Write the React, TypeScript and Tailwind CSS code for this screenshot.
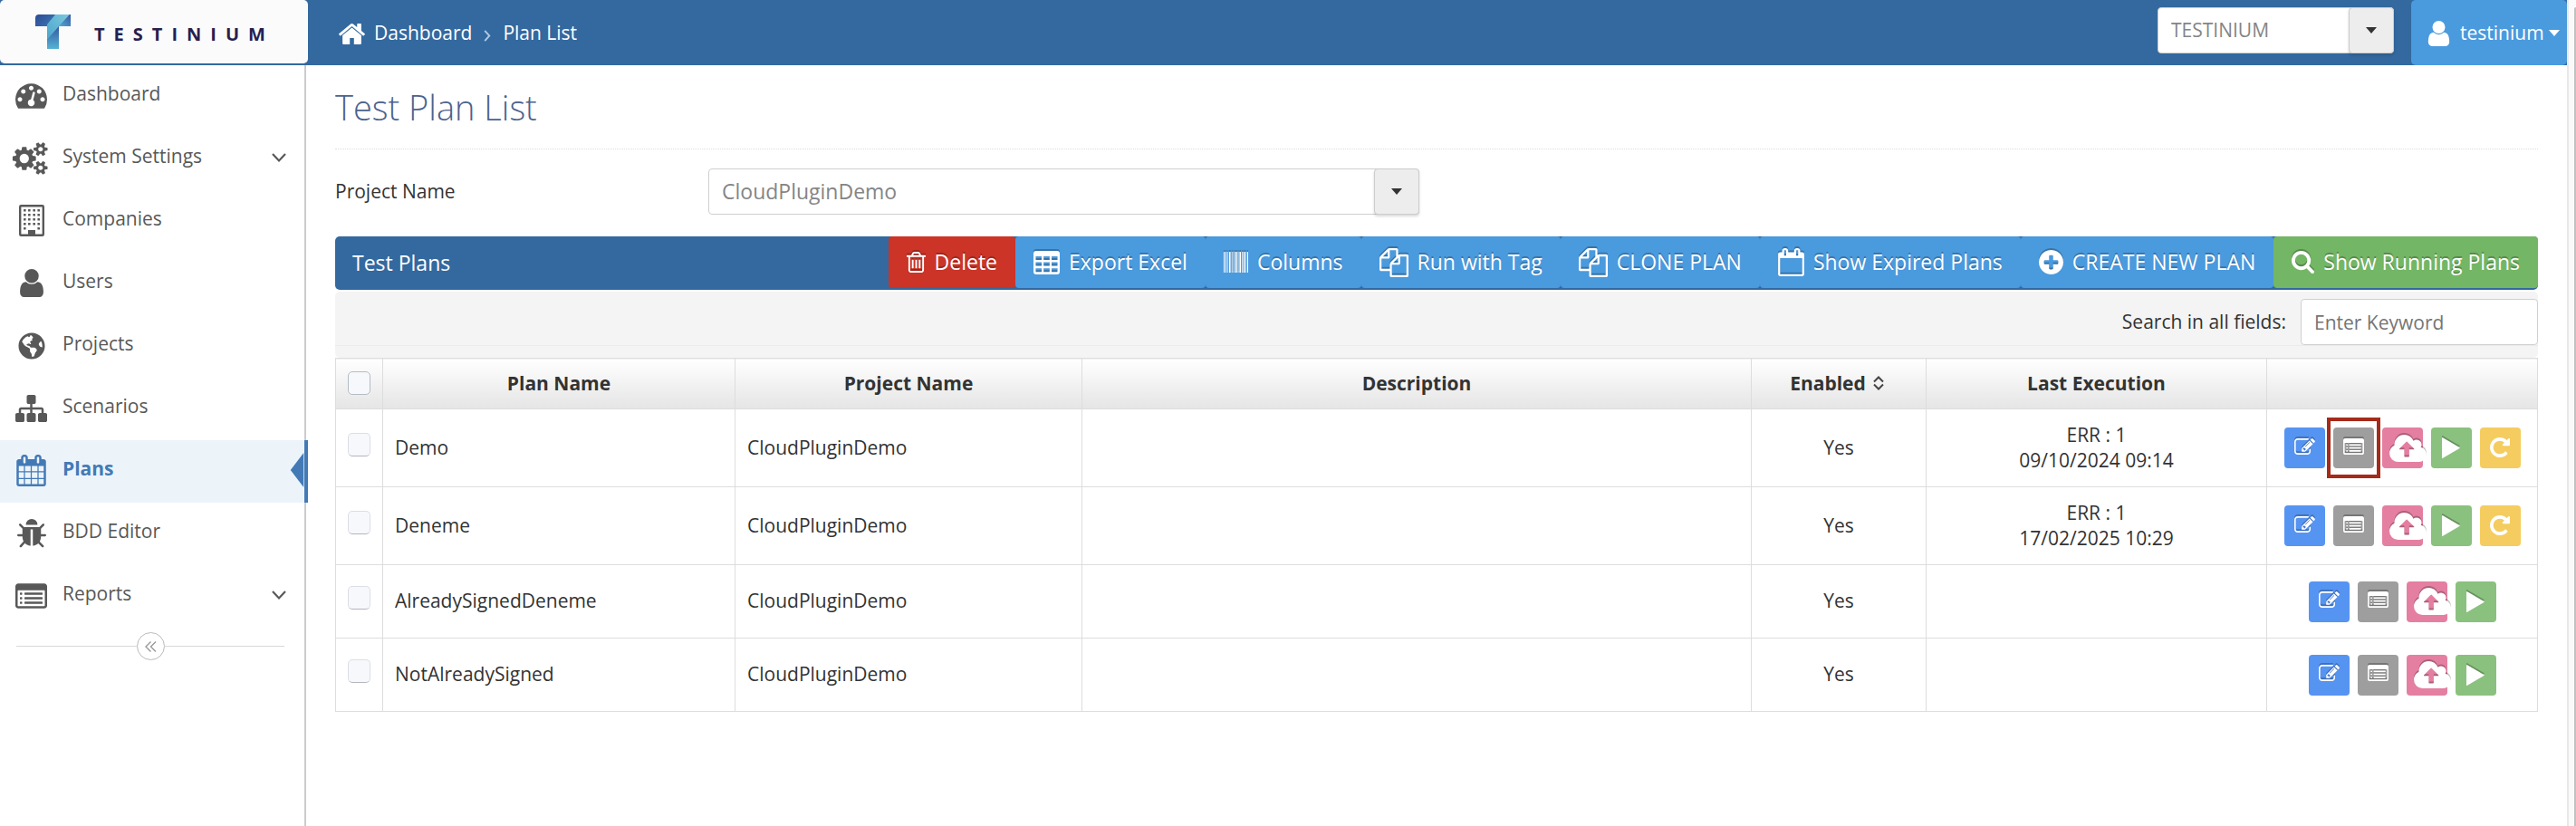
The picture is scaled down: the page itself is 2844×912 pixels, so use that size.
import React from "react";
import { FaGlobeAmericas } from "react-icons/fa";

const PATHS = {
  home: {
    box: "90 200 1612 1336",
    d: "M1472 992v480q0 26-19 45t-45 19h-384v-384h-256v384h-384q-26 0-45-19t-19-45v-480q0-1 .5-3t.5-3l575-474 575 474q1 2 1 6zm223-69l-62 74q-8 9-21 11h-3q-13 0-21-7l-692-577-692 577q-12 8-24 7-13-2-21-11l-62-74q-8-10-7-23.5t11-21.5l719-599q32-26 76-26t76 26l244 204v-195q0-14 9-23t23-9h192q14 0 23 9t9 23v408l219 182q10 8 11 21.5t-7 23.5z",
  },
  user: {
    box: "256 128 1280 1536",
    d: "M1536 1399q0 109-62.5 187t-150.5 78h-854q-88 0-150.5-78t-62.5-187q0-85 8.5-160.5t31.5-152 58.5-131 94-89 134.5-34.5q131 128 313 128t313-128q76 0 134.5 34.5t94 89 58.5 131 31.5 152 8.5 160.5zm-256-887q0 159-112.5 271.5t-271.5 112.5-271.5-112.5-112.5-271.5 112.5-271.5 271.5-112.5 271.5 112.5 112.5 271.5z",
  },
  gauge: {
    box: "0 256 1792 1408",
    d: "M384 1152q0-53-37.5-90.5t-90.5-37.5-90.5 37.5-37.5 90.5 37.5 90.5 90.5 37.5 90.5-37.5 37.5-90.5zm192-448q0-53-37.5-90.5t-90.5-37.5-90.5 37.5-37.5 90.5 37.5 90.5 90.5 37.5 90.5-37.5 37.5-90.5zm428 481l101-382q6-26-7.5-48.5t-38.5-29.5-48 6.5-30 39.5l-101 382q-60 5-107 43.5t-63 98.5q-20 77 20 146t117 89 146-20 89-117q16-60-6-117t-72-91zm660-33q0-53-37.5-90.5t-90.5-37.5-90.5 37.5-37.5 90.5 37.5 90.5 90.5 37.5 90.5-37.5 37.5-90.5zm-640-640q0-53-37.5-90.5t-90.5-37.5-90.5 37.5-37.5 90.5 37.5 90.5 90.5 37.5 90.5-37.5 37.5-90.5zm448 192q0-53-37.5-90.5t-90.5-37.5-90.5 37.5-37.5 90.5 37.5 90.5 90.5 37.5 90.5-37.5 37.5-90.5zm320 448q0 261-141 483-19 29-54 29h-1402q-35 0-54-29-141-221-141-483 0-182 71-348t191-286 286-191 348-71 348 71 286 191 191 286 71 348z",
  },
  cogs: {
    box: "0 0 1920 1792",
    d: "M832 896q0-106-75-181t-181-75-181 75-75 181 75 181 181 75 181-75 75-181zm768 512q0-52-38-90t-90-38-90 38-38 90q0 53 37.5 90.5t90.5 37.5 90.5-37.5 37.5-90.5zm0-1024q0-52-38-90t-90-38-90 38-38 90q0 53 37.5 90.5t90.5 37.5 90.5-37.5 37.5-90.5zm-384 421v185q0 10-7 19.5t-16 10.5l-155 24q-11 35-32 76 34 48 90 115 7 11 7 20 0 12-7 19-23 30-82.5 89.5t-78.5 59.5q-11 0-21-7l-115-90q-37 19-77 31-11 108-23 155-7 24-30 24h-186q-11 0-20-7.5t-10-17.5l-23-153q-34-10-75-31l-118 89q-7 7-20 7-11 0-21-8-144-133-144-160 0-9 7-19 10-14 41-53t47-61q-23-44-35-82l-152-24q-10-1-17-9.5t-7-19.5v-185q0-10 7-19.5t16-10.5l155-24q11-35 32-76-34-48-90-115-7-11-7-20 0-12 7-20 22-30 82-89t79-59q11 0 21 7l115 90q34-18 77-32 11-108 23-154 7-24 30-24h186q11 0 20 7.5t10 17.5l23 153q34 10 75 31l118-89q8-7 20-7 11 0 21 8 144 133 144 160 0 8-7 19-12 16-42 54t-45 60q23 48 34 82l152 23q10 2 17 10.5t7 19.5zm640 533v140q0 16-149 31-12 27-30 52 51 113 51 138 0 4-4 7-122 71-124 71-8 0-46-47t-52-68q-20 2-30 2t-30-2q-14 21-52 68t-46 47q-2 0-124-71-4-3-4-7 0-25 51-138-18-25-30-52-149-15-149-31v-140q0-16 149-31 13-29 30-52-51-113-51-138 0-4 4-7 4-2 35-20t59-34 30-16q8 0 46 46.5t52 67.5q20-2 30-2t30 2q51-71 92-112l6-2q4 0 124 70 4 3 4 7 0 25-51 138 17 23 30 52 149 15 149 31zm0-1024v140q0 16-149 31-12 27-30 52 51 113 51 138 0 4-4 7-122 71-124 71-8 0-46-47t-52-68q-20 2-30 2t-30-2q-14 21-52 68t-46 47q-2 0-124-71-4-3-4-7 0-25 51-138-18-25-30-52-149-15-149-31v-140q0-16 149-31 13-29 30-52-51-113-51-138 0-4 4-7 4-2 35-20t59-34 30-16q8 0 46 46.5t52 67.5q20-2 30-2t30 2q51-71 92-112l6-2q4 0 124 70 4 3 4 7 0 25-51 138 17 23 30 52 149 15 149 31z",
  },
  sitemap: {
    box: "0 128 1792 1536",
    d: "M1792 1248v320q0 40-28 68t-68 28h-320q-40 0-68-28t-28-68v-320q0-40 28-68t68-28h96v-192h-512v192h96q40 0 68 28t28 68v320q0 40-28 68t-68 28h-320q-40 0-68-28t-28-68v-320q0-40 28-68t68-28h96v-192h-512v192h96q40 0 68 28t28 68v320q0 40-28 68t-68 28h-320q-40 0-68-28t-28-68v-320q0-40 28-68t68-28h96v-192q0-52 38-90t90-38h512v-192h-96q-40 0-68-28t-28-68v-320q0-40 28-68t68-28h320q40 0 68 28t28 68v320q0 40-28 68t-68 28h-96v192h512q52 0 90 38t38 90v192h96q40 0 68 28t28 68z",
  },
  calendar: {
    box: "64 0 1664 1792",
    d: "M192 1664h288v-288h-288v288zm352 0h320v-288h-320v288zm-352-352h288v-320h-288v320zm352 0h320v-320h-320v320zm-352-384h288v-288h-288v288zm736 736h320v-288h-320v288zm-384-736h320v-288h-320v288zm768 736h288v-288h-288v288zm-384-352h320v-320h-320v320zm-352-864v-288q0-13-9.5-22.5t-22.5-9.5h-64q-13 0-22.5 9.5t-9.5 22.5v288q0 13 9.5 22.5t22.5 9.5h64q13 0 22.5-9.5t9.5-22.5zm736 864h288v-320h-288v320zm-384-384h320v-288h-320v288zm384 0h288v-288h-288v288zm32-480v-288q0-13-9.5-22.5t-22.5-9.5h-64q-13 0-22.5 9.5t-9.5 22.5v288q0 13 9.5 22.5t22.5 9.5h64q13 0 22.5-9.5t9.5-22.5zm384-64v1280q0 52-38 90t-90 38h-1408q-52 0-90-38t-38-90v-1280q0-52 38-90t90-38h128v-96q0-66 47-113t113-47h64q66 0 113 47t47 113v96h384v-96q0-66 47-113t113-47h64q66 0 113 47t47 113v96h128q52 0 90 38t38 90z",
  },
  calendarBlank: {
    box: "64 0 1664 1792",
    d: "M192 1664h1408v-1024h-1408v1024zm384-1216v-288q0-14-9-23t-23-9h-64q-14 0-23 9t-9 23v288q0 14 9 23t23 9h64q14 0 23-9t9-23zm768 0v-288q0-14-9-23t-23-9h-64q-14 0-23 9t-9 23v288q0 14 9 23t23 9h64q14 0 23-9t9-23zm384-64v1280q0 52-38 90t-90 38h-1408q-52 0-90-38t-38-90v-1280q0-52 38-90t90-38h128v-96q0-66 47-113t113-47h64q66 0 113 47t47 113v96h384v-96q0-66 47-113t113-47h64q66 0 113 47t47 113v96h128q52 0 90 38t38 90z",
  },
  bug: {
    box: "96 64 1600 1600",
    d: "M1696 960q0 26-19 45t-45 19h-224q0 171-67 290l208 209q19 19 19 45t-19 45q-18 19-45 19t-45-19l-198-197q-5 5-15 13t-42 28.5-65 36.5-82 29-97 13v-896h-128v896q-51 0-101.5-13.5t-87-33-66-39-43.5-32.5l-15-14-183 207q-20 21-48 21-24 0-43-16-19-18-20.5-44.5t15.5-46.5l202-227q-58-114-58-274h-224q-26 0-45-19t-19-45 19-45 45-19h224v-294l-173-173q-19-19-19-45t19-45 45-19 45 19l173 173h844l173-173q19-19 45-19t45 19 19 45-19 45l-173 173v294h224q26 0 45 19t19 45zm-480-576h-640q0-133 93.5-226.5t226.5-93.5 226.5 93.5 93.5 226.5z",
  },
  list: {
    box: "0 128 1792 1408",
    d: "M384 1184v64q0 13-9.5 22.5t-22.5 9.5h-64q-13 0-22.5-9.5t-9.5-22.5v-64q0-13 9.5-22.5t22.5-9.5h64q13 0 22.5 9.5t9.5 22.5zm0-256v64q0 13-9.5 22.5t-22.5 9.5h-64q-13 0-22.5-9.5t-9.5-22.5v-64q0-13 9.5-22.5t22.5-9.5h64q13 0 22.5 9.5t9.5 22.5zm0-256v64q0 13-9.5 22.5t-22.5 9.5h-64q-13 0-22.5-9.5t-9.5-22.5v-64q0-13 9.5-22.5t22.5-9.5h64q13 0 22.5 9.5t9.5 22.5zm1152 512v64q0 13-9.5 22.5t-22.5 9.5h-960q-13 0-22.5-9.5t-9.5-22.5v-64q0-13 9.5-22.5t22.5-9.5h960q13 0 22.5 9.5t9.5 22.5zm0-256v64q0 13-9.5 22.5t-22.5 9.5h-960q-13 0-22.5-9.5t-9.5-22.5v-64q0-13 9.5-22.5t22.5-9.5h960q13 0 22.5 9.5t9.5 22.5zm0-256v64q0 13-9.5 22.5t-22.5 9.5h-960q-13 0-22.5-9.5t-9.5-22.5v-64q0-13 9.5-22.5t22.5-9.5h960q13 0 22.5 9.5t9.5 22.5zm128 704v-832q0-13-9.5-22.5t-22.5-9.5h-1472q-13 0-22.5 9.5t-9.5 22.5v832q0 13 9.5 22.5t22.5 9.5h1472q13 0 22.5-9.5t9.5-22.5zm128-1088v1088q0 66-47 113t-113 47h-1472q-66 0-113-47t-47-113v-1088q0-66 47-113t113-47h1472q66 0 113 47t47 113z",
  },
  trash: {
    box: "192 128 1408 1536",
    d: "M704 736v576q0 14-9 23t-23 9h-64q-14 0-23-9t-9-23v-576q0-14 9-23t23-9h64q14 0 23 9t9 23zm256 0v576q0 14-9 23t-23 9h-64q-14 0-23-9t-9-23v-576q0-14 9-23t23-9h64q14 0 23 9t9 23zm256 0v576q0 14-9 23t-23 9h-64q-14 0-23-9t-9-23v-576q0-14 9-23t23-9h64q14 0 23 9t9 23zm128 724v-948h-896v948q0 22 7 40.5t14.5 27 10.5 8.5h832q3 0 10.5-8.5t14.5-27 7-40.5zm-672-1076h448l-48-117q-7-9-17-11h-317q-10 2-17 11zm928 32v64q0 14-9 23t-23 9h-96v948q0 83-47 143.5t-113 60.5h-832q-66 0-113-58.5t-47-141.5v-952h-96q-14 0-23-9t-9-23v-64q0-14 9-23t23-9h309l70-167q15-37 54-63t79-26h320q40 0 79 26t54 63l70 167h309q14 0 23 9t9 23z",
  },
  files: {
    box: "0 0 1792 1792",
    d: "M1696 384q40 0 68 28t28 68v1216q0 40-28 68t-68 28h-960q-40 0-68-28t-28-68v-288h-544q-40 0-68-28t-28-68v-672q0-40 20-88t48-76l408-408q28-28 76-48t88-20h416q40 0 68 28t28 68v328q68-40 128-40h416zm-544 213l-299 299h299v-299zm-640-384l-299 299h299v-299zm196 647l316-316v-416h-384v416q0 40-28 68t-68 28h-416v640h512v-256q0-40 20-88t48-76zm956 804v-1152h-384v416q0 40-28 68t-68 28h-416v640h896z",
  },
  plus: {
    box: "128 128 1536 1536",
    d: "M1344 960v-128q0-26-19-45t-45-19h-256v-256q0-26-19-45t-45-19h-128q-26 0-45 19t-19 45v256h-256q-26 0-45 19t-19 45v128q0 26 19 45t45 19h256v256q0 26 19 45t45 19h128q26 0 45-19t19-45v-256h256q26 0 45-19t19-45zm320-64q0 209-103 385.5t-279.5 279.5-385.5 103-385.5-103-279.5-279.5-103-385.5 103-385.5 279.5-279.5 385.5-103 385.5 103 279.5 279.5 103 385.5z",
  },
  search: {
    box: "64 128 1664 1664",
    d: "M1216 832q0-185-131.5-316.5t-316.5-131.5-316.5 131.5-131.5 316.5 131.5 316.5 316.5 131.5 316.5-131.5 131.5-316.5zm512 832q0 52-38 90t-90 38q-54 0-90-38l-343-342q-179 124-399 124-143 0-273.5-55.5t-225-150-150-225-55.5-273.5 55.5-273.5 150-225 225-150 273.5-55.5 273.5 55.5 225 150 150 225 55.5 273.5q0 220-124 399l343 343q37 37 37 90z",
  },
  edit: {
    box: "0 128 1792 1408",
    d: "M888 1184l116-116-152-152-116 116v56h96v96h56zm440-720q-16-16-33 1l-350 350q-17 17-1 33t33-1l350-350q17-17 1-33zm80 594v190q0 119-84.5 203.5t-203.5 84.5h-832q-119 0-203.5-84.5t-84.5-203.5v-832q0-119 84.5-203.5t203.5-84.5h832q63 0 117 25 15 7 18 23 3 17-9 29l-49 49q-14 14-32 8-23-6-45-6h-832q-66 0-113 47t-47 113v832q0 66 47 113t113 47h832q66 0 113-47t47-113v-126q0-13 9-22l64-64q15-15 35-7t20 29zm-96-738l288 288-672 672h-288v-288zm444 132l-92 92-288-288 92-92q28-28 68-28t68 28l152 152q28 28 28 68t-28 68z",
  },
  cloud: {
    box: "-64 128 1920 1408",
    d: "M1216 864q0-14-9-23l-352-352q-9-9-23-9t-23 9l-351 351q-10 12-10 24 0 14 9 23t23 9h224v352q0 13 9.5 22.5t22.5 9.5h192q13 0 22.5-9.5t9.5-22.5v-352h224q13 0 22.5-9.5t9.5-22.5zm640 288q0 159-112.5 271.5t-271.5 112.5h-1088q-185 0-316.5-131.5t-131.5-316.5q0-130 70-240t188-165q-2-30-2-43 0-212 150-362t362-150q156 0 285.5 87t188.5 231q71-62 166-62 106 0 181 75t75 181q0 76-41 138 130 31 213.5 135.5t83.5 238.5z",
  },
  play: { box: "0 0 20 23", d: "M0 0.6 L0 22.4 Q0.2 23.2 1 22.8 L19.4 12 Q20 11.5 19.4 11 L1 0.2 Q0.2 -0.2 0 0.6z" },
  repeat: {
    box: "128 128 1536 1536",
    d: "M1664 256v448q0 26-19 45t-45 19h-448q-42 0-59-40-17-39 14-69l138-138q-148-137-349-137-104 0-198.5 40.5t-163.5 109.5-109.5 163.5-40.5 198.5 40.5 198.5 109.5 163.5 163.5 109.5 198.5 40.5q119 0 225-52t179-147q7-10 23-12 15 0 25 9l137 138q9 8 9.5 20.5t-7.5 22.5q-109 132-264 204.5t-327 72.5q-156 0-298-61t-245-164-164-245-61-298 61-298 164-245 245-164 298-61q147 0 284.5 55.5t244.5 156.5l130-129q29-31 70-14 39 17 39 59z",
  },
};

type IconName = keyof typeof PATHS;

function Icon({ name, className }: { name: IconName; className: string }) {
  return (
    <svg viewBox={PATHS[name].box} className={`shrink-0 overflow-visible ${className}`} fill="currentColor" aria-hidden="true">
      <path d={PATHS[name].d} />
    </svg>
  );
}

function BuildingIcon() {
  return (
    <svg viewBox="0 0 28 35" className="h-[35px] w-[28px]" fill="currentColor" aria-hidden="true">
      <rect x="1.2" y="1.2" width="25.6" height="32.6" rx="1" fill="none" stroke="currentColor" strokeWidth="2.4" />
      {[5, 10, 15, 20, 25].map((y) =>
        [5, 10, 15.4, 20.4].map((x) =>
          y === 25 && x > 5 && x < 20 ? null : <rect key={`${x}-${y}`} x={x} y={y} width="2.6" height="2.6" rx="0.5" />
        )
      )}
      <rect x="10" y="28" width="8" height="6.5" />
    </svg>
  );
}

function TableIcon() {
  return (
    <svg viewBox="0 0 29 26" className="h-[26px] w-[29px] shrink-0" fill="currentColor" fillRule="evenodd" aria-hidden="true">
      <path d="M3 0h23q3 0 3 3v20q0 3-3 3h-23q-3 0-3-3v-20q0-3 3-3z M2.5 6v4h6.5v-4z M11.2 6v4h6.6v-4z M20 6v4h6.5v-4z M2.5 12.6v4h6.5v-4z M11.2 12.6v4h6.6v-4z M20 12.6v4h6.5v-4z M2.5 19.2v4h6.5v-4z M11.2 19.2v4h6.6v-4z M20 19.2v4h6.5v-4z" />
    </svg>
  );
}

function BarcodeIcon() {
  const bars = [[0, 1], [2, 1], [4.2, 0.7], [6, 1.6], [8.8, 0.8], [10.8, 0.8], [12.8, 1.8], [15.6, 0.8], [17.4, 1.6], [20, 0.8], [21.8, 1.6], [24.2, 0.7], [26, 1]];
  return (
    <svg viewBox="0 0 27 23" className="h-[23px] w-[27px] shrink-0" fill="currentColor" aria-hidden="true">
      {bars.map(([x, w]) => (
        <rect key={x} x={x} y="0" width={w} height="23" />
      ))}
    </svg>
  );
}

function Chevron() {
  return (
    <svg viewBox="0 0 16 10" className="h-[10px] w-[16px]" fill="none" stroke="currentColor" strokeWidth="2.2" aria-hidden="true">
      <path d="M1 1l7 7.4 7-7.4" />
    </svg>
  );
}

function Caret({ className }: { className: string }) {
  return (
    <svg viewBox="0 0 12 7" className={className} fill="currentColor" aria-hidden="true">
      <path d="M0 0h12l-6 7z" />
    </svg>
  );
}

const NAV: { label: string; icon: React.ReactNode; expandable?: boolean; active?: boolean }[] = [
  { label: "Dashboard", icon: <Icon name="gauge" className="h-[28px] w-[35px]" /> },
  { label: "System Settings", icon: <Icon name="cogs" className="h-[36px] w-[39px]" />, expandable: true },
  { label: "Companies", icon: <BuildingIcon /> },
  { label: "Users", icon: <Icon name="user" className="h-[31px] w-[28px]" /> },
  { label: "Projects", icon: <FaGlobeAmericas className="size-[30px]" /> },
  { label: "Scenarios", icon: <Icon name="sitemap" className="h-[30px] w-[35px]" /> },
  { label: "Plans", icon: <Icon name="calendar" className="h-[35px] w-[33px]" />, active: true },
  { label: "BDD Editor", icon: <Icon name="bug" className="size-[32px]" /> },
  { label: "Reports", icon: <Icon name="list" className="h-[28px] w-[35px]" />, expandable: true },
];

function Sidebar() {
  return (
    <aside className="w-[338px] shrink-0 border-r-2 border-[#cccccc] bg-white text-[#585858]">
      <nav>
        {NAV.map((item) => (
          <a
            key={item.label}
            href="#"
            className={`relative flex h-[69px] items-center pr-5 ${item.active ? "bg-[#ecf4fa] font-bold text-[#437ab6]" : ""}`}
          >
            <span className="flex w-[69px] justify-center pb-[2px]">{item.icon}</span>
            <span className="flex-1 pb-[6px]">{item.label}</span>
            {item.expandable && <span className="pb-1"><Chevron /></span>}
            {item.active && (
              <span className="absolute -right-1 top-0 flex h-full items-center" aria-hidden="true">
                <svg viewBox="0 0 16 42" className="h-[42px] w-[16px] pb-1" fill="currentColor">
                  <path d="M16 0v42l-16-21z" />
                </svg>
                <span className="h-full w-1 bg-[#437ab6]" />
              </span>
            )}
          </a>
        ))}
      </nav>
      <div className="flex items-center pl-[18px] pr-[22px] pt-[5px]">
        <span className="h-px flex-1 bg-[#d8d8d8]" />
        <button type="button" aria-label="Collapse menu" className="flex size-[31px] items-center justify-center rounded-full border border-[#bbbbbb] text-[#999999]">
          <svg viewBox="0 0 13 12" className="h-[12px] w-[13px]" fill="none" stroke="currentColor" strokeWidth="1.4" aria-hidden="true">
            <path d="M6.5 0.5l-5.5 5.5 5.5 5.5M12 0.5l-5.5 5.5 5.5 5.5" />
          </svg>
        </button>
        <span className="h-px flex-1 bg-[#d8d8d8]" />
      </div>
    </aside>
  );
}

function Combo({ id, label, value, className }: { id: string; label: string; value: string; className: string }) {
  return (
    <div className={`relative h-[51px] ${className}`}>
      <select id={id} aria-label={label} className="h-full w-full appearance-none rounded-[4px] border border-[#cfcfcf] bg-white pl-[14px] text-[#858585]">
        <option>{value}</option>
      </select>
      <span className="pointer-events-none absolute inset-y-0 right-0 flex w-[50px] items-center justify-center rounded-[4px] border border-[#cccccc] bg-[#ededed] text-[#333333] shadow-[0_2px_3px_rgba(0,0,0,0.15)]">
        <Caret className="h-[7px] w-[12px]" />
      </span>
    </div>
  );
}

function Header() {
  return (
    <header className="flex h-[72px] items-start bg-[#33699f] text-white">
      <a href="#" aria-label="Testinium" className="flex h-[70px] w-[340px] shrink-0 items-center rounded-[5px] bg-[#fbfbfb] pl-[39px] text-[#281f4f]">
        <svg viewBox="0 0 39 38" className="h-[38px] w-[39px] shrink-0" aria-hidden="true">
          <defs>
            <linearGradient id="mark-l" x1="0" y1="0" x2="1" y2="1">
              <stop offset="0" stopColor="#2f4a94" />
              <stop offset="0.45" stopColor="#3a7ab5" />
              <stop offset="1" stopColor="#56b5d3" />
            </linearGradient>
            <linearGradient id="mark-r" x1="0" y1="1" x2="1" y2="0">
              <stop offset="0" stopColor="#4fabd0" />
              <stop offset="1" stopColor="#3a57a5" />
            </linearGradient>
            <linearGradient id="mark-m" x1="0" y1="1" x2="1" y2="0">
              <stop offset="0" stopColor="#4aa5cc" />
              <stop offset="1" stopColor="#7cc8dc" />
            </linearGradient>
            <linearGradient id="mark-s" x1="0" y1="1" x2="0" y2="0">
              <stop offset="0" stopColor="#55b3d2" />
              <stop offset="1" stopColor="#3558a3" />
            </linearGradient>
          </defs>
          <path d="M4 0H39V13H26V38H13V13H0V4Q0 0 4 0Z" fill="url(#mark-l)" />
          <path d="M22 0H38L13 28V11Z" fill="url(#mark-m)" />
          <path d="M39 0V13H26L38 0Z" fill="url(#mark-r)" />
          <path d="M26 13V38H13V28Z" fill="url(#mark-s)" />
        </svg>
        <span className="pl-[26px] pt-[6px] text-[20px] font-bold tracking-[10px]">TESTINIUM</span>
      </a>
      <nav aria-label="Breadcrumb" className="flex h-[72px] flex-1 items-center pl-[34px] pt-[1px]">
        <Icon name="home" className="h-[24px] w-[29px]" />
        <a href="#" className="pl-[10px]">Dashboard</a>
        <svg viewBox="0 0 8 14" className="mx-[13px] mt-[6px] h-[13px] w-[8px]" fill="none" stroke="#b2cbe3" strokeWidth="2" aria-hidden="true">
          <path d="M1 1l5.5 6-5.5 6" />
        </svg>
        <span>Plan List</span>
      </nav>
      <Combo id="company" label="Company" value="TESTINIUM" className="mr-[19px] mt-2 w-[261px]" />
      <button type="button" className="flex h-[72px] w-[172px] shrink-0 items-center rounded-[5px] bg-[#4a9ade] pl-[18px] pt-[1px]">
        <Icon name="user" className="h-[28px] w-[25px]" />
        <span className="pl-[11px] pr-[5px]">testinium</span>
        <Caret className="h-[7px] w-[12px]" />
      </button>
    </header>
  );
}

const TOOLS: { label: string; icon: React.ReactNode; tone: string }[] = [
  { label: "Delete", icon: <Icon name="trash" className="h-[23px] w-[21px]" />, tone: "bg-[#cb3427]" },
  { label: "Export Excel", icon: <TableIcon />, tone: "bg-[#4a9ade]" },
  { label: "Columns", icon: <BarcodeIcon />, tone: "bg-[#4a9ade]" },
  { label: "Run with Tag", icon: <Icon name="files" className="size-[32px]" />, tone: "bg-[#4a9ade]" },
  { label: "CLONE PLAN", icon: <Icon name="files" className="size-[32px]" />, tone: "bg-[#4a9ade]" },
  { label: "Show Expired Plans", icon: <Icon name="calendarBlank" className="h-[31px] w-[29px]" />, tone: "bg-[#4a9ade]" },
  { label: "CREATE NEW PLAN", icon: <Icon name="plus" className="size-[27px]" />, tone: "bg-[#4a9ade]" },
  { label: "Show Running Plans", icon: <Icon name="search" className="size-[25px]" />, tone: "bg-[#73b665]" },
];

function Toolbar() {
  return (
    <div className="flex h-[59px] items-start rounded-[5px] bg-[#33699f] text-[23px] text-white">
      <h2 className="flex h-[59px] flex-1 items-center pl-[19px]">Test Plans</h2>
      {TOOLS.map((tool) => (
        <button
          key={tool.label}
          type="button"
          className={`flex h-[57px] items-center gap-[10px] rounded-[4px] px-[20px] [text-shadow:0_-2px_0_rgba(0,0,0,0.25)] ${tool.tone}`}
        >
          <span className="[filter:drop-shadow(0_-2px_0_rgba(0,0,0,0.25))]">{tool.icon}</span>
          <span>{tool.label}</span>
        </button>
      ))}
    </div>
  );
}

const PLANS = [
  { name: "Demo", project: "CloudPluginDemo", enabled: "Yes", status: "ERR : 1", date: "09/10/2024 09:14", marked: true },
  { name: "Deneme", project: "CloudPluginDemo", enabled: "Yes", status: "ERR : 1", date: "17/02/2025 10:29" },
  { name: "AlreadySignedDeneme", project: "CloudPluginDemo", enabled: "Yes" },
  { name: "NotAlreadySigned", project: "CloudPluginDemo", enabled: "Yes" },
];

const ACTION = "relative flex size-[45px] items-center justify-center rounded-[4px] text-white";
const GLYPH_SHADOW = "[filter:drop-shadow(0_-2px_0_rgba(0,0,0,0.25))]";

function Actions({ marked, rerun }: { marked?: boolean; rerun: boolean }) {
  return (
    <div className="flex justify-center gap-[9px]">
      <button type="button" aria-label="Edit" className={`${ACTION} bg-[#5694f2]`}>
        <Icon name="edit" className={`mb-1 h-[18px] w-[23px] ${GLYPH_SHADOW}`} />
      </button>
      <button type="button" aria-label="Details" className={`${ACTION} bg-[#9e9e9e]`}>
        <Icon name="list" className={`mb-1 h-[18px] w-[23px] ${GLYPH_SHADOW}`} />
        {marked && <span className="absolute -inset-x-[7px] -inset-y-[11px] border-4 border-[#a52a1a]" />}
      </button>
      <button type="button" aria-label="Upload" className={`${ACTION} bg-[#e47fa2] pl-[12px]`}>
        <Icon name="cloud" className={`h-[30px] w-[41px] ${GLYPH_SHADOW}`} />
      </button>
      <button type="button" aria-label="Run" className={`${ACTION} bg-[#8ac17e]`}>
        <Icon name="play" className={`h-[23px] w-[20px] ${GLYPH_SHADOW}`} />
      </button>
      {rerun && (
        <button type="button" aria-label="Run again" className={`${ACTION} bg-[#f5cc5f]`}>
          <Icon name="repeat" className="mb-[2px] size-[22px]" />
        </button>
      )}
    </div>
  );
}

const TH = "h-[56px] border border-[#dddddd] bg-linear-to-b from-white to-[#e5e5e5] p-0 pb-[2px] text-center font-bold";
const TD = "border border-[#dddddd] px-[13px] pt-0 pb-[2px]";
const CHECK = "block h-[26px] w-[25px] appearance-none rounded-[5px] border bg-[#f6f8fc]";

function PlanTable() {
  return (
    <table className="w-full table-fixed border-collapse leading-[28px] text-[#333333]">
      <colgroup>
        <col className="w-[52px]" />
        <col className="w-[389px]" />
        <col className="w-[383px]" />
        <col />
        <col className="w-[193px]" />
        <col className="w-[376px]" />
        <col className="w-[299px]" />
      </colgroup>
      <thead>
        <tr>
          <th className={TH}>
            <input type="checkbox" aria-label="Select all plans" className={`${CHECK} mx-auto border-[#b4bcc4]`} />
          </th>
          <th className={TH}>Plan Name</th>
          <th className={TH}>Project Name</th>
          <th className={TH}>Description</th>
          <th className={TH}>
            <span className="inline-flex items-center gap-2 pr-1">
              Enabled
              <svg viewBox="0 0 12 16" className="h-[16px] w-[12px]" fill="none" stroke="#444444" strokeWidth="2" aria-hidden="true">
                <path d="M1 6.5l5-5 5 5M1 9.5l5 5 5-5" />
              </svg>
            </span>
          </th>
          <th className={TH}>Last Execution</th>
          <th className={TH} aria-label="Actions" />
        </tr>
      </thead>
      <tbody>
        {PLANS.map((plan) => (
          <tr key={plan.name} className={plan.date ? "h-[86px]" : "h-[81px]"}>
            <td className="border border-[#dddddd] p-0 pb-[8px]">
              <input type="checkbox" aria-label={`Select ${plan.name}`} className={`${CHECK} mx-auto border-[#dcdee6] border-b-[#b5b5bd]`} />
            </td>
            <td className={TD}>{plan.name}</td>
            <td className={TD}>{plan.project}</td>
            <td className={TD} />
            <td className={`${TD} text-center`}>{plan.enabled}</td>
            <td className={`${TD} text-center`}>
              {plan.date && (
                <>
                  {plan.status}
                  <br />
                  {plan.date}
                </>
              )}
            </td>
            <td className="border border-[#dddddd] p-0">
              <Actions marked={plan.marked} rerun={Boolean(plan.date)} />
            </td>
          </tr>
        ))}
      </tbody>
    </table>
  );
}

export default function App() {
  return (
    <div className="flex min-h-screen bg-white font-['Open_Sans','Noto_Sans',sans-serif] text-[21px] text-[#333333]">
      <div className="flex min-w-0 flex-1 flex-col">
        <Header />
        <div className="flex flex-1">
          <Sidebar />
          <main className="min-w-0 flex-1 pl-[32px] pr-[32px]">
            <h1 className="flex h-[93px] items-center border-b border-dotted border-[#dddddd] text-[38px] font-light text-[#4c628e]">Test Plan List</h1>
            <div className="flex items-center pt-[21px]">
              <label htmlFor="project" className="w-[412px]">
                Project Name
              </label>
              <Combo id="project" label="Project Name" value="CloudPluginDemo" className="w-[785px] text-[23px]" />
            </div>
            <div className="pt-6">
              <Toolbar />
            </div>
            <div className="mt-[2px] rounded-[5px] bg-[#f4f4f4] pb-[13px]">
              <div className="flex items-end justify-end gap-4 border-b border-[#ebebeb] pt-2">
                <label htmlFor="keyword" className="self-center">
                  Search in all fields:
                </label>
                <input
                  id="keyword"
                  type="text"
                  placeholder="Enter Keyword"
                  className="h-[51px] w-[262px] rounded-[4px] border border-[#d0d0d0] bg-white pl-[14px] placeholder:text-[#757575]"
                />
              </div>
            </div>
            <PlanTable />
          </main>
        </div>
      </div>
      <div className="w-[10px] shrink-0 border-l-2 border-[#e8e8e8] bg-[#fafafa] pl-[6px] pt-2" aria-hidden="true">
        <div className="h-full rounded-tl-[4px] bg-[#c1c1c1]" />
      </div>
    </div>
  );
}
